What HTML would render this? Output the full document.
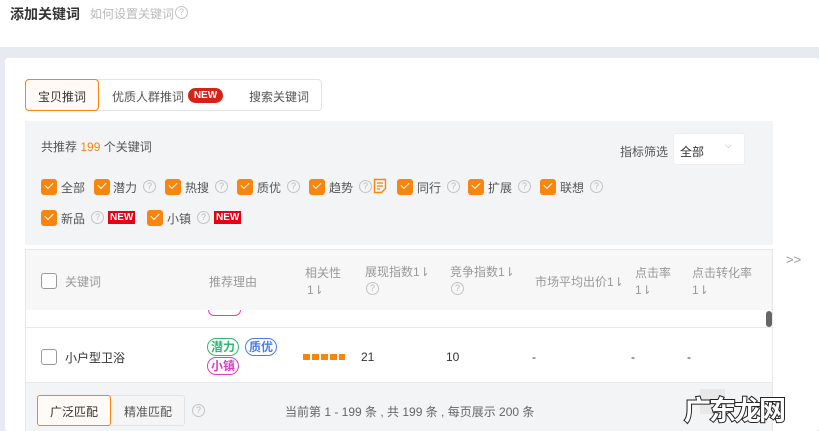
<!DOCTYPE html>
<html><head><meta charset="utf-8"><style>
*{margin:0;padding:0;box-sizing:border-box}
body{width:819px;height:431px;overflow:hidden;background:#fff;font-family:"Liberation Sans","Noto Sans CJK SC",sans-serif;font-size:12px;color:#333;position:relative}
.a{position:absolute;white-space:nowrap}
.cb{position:absolute;width:16px;height:16px;border-radius:3px;background:#f7850e}
.cb::after{content:"";position:absolute;left:4px;top:3px;width:7px;height:4px;border-left:1.6px solid #fff;border-bottom:1.6px solid #fff;transform:rotate(-45deg)}
.cbe{position:absolute;width:16px;height:16px;border-radius:3px;border:1px solid #999;background:#fff}
.q{position:absolute;width:13px;height:13px;border:1px solid #c4c4c4;border-radius:50%;color:#bbb;font-size:9px;line-height:11px;text-align:center}
.new{position:absolute;background:#e60012;color:#fff;font-size:10px;font-weight:bold;height:13px;line-height:13px;padding:0 2px}
.tag{position:absolute;height:18px;border:1px solid;border-radius:9px;font-size:12px;font-weight:bold;line-height:16px;padding:0 3px}
.g{color:#999}
</style></head><body>
<div class="a" style="left:10px;top:4px;font-size:14px;font-weight:bold;color:#333">添加关键词</div>
<div class="a" style="left:90px;top:5px;font-size:12px;color:#bbb">如何设置关键词</div>
<div class="q" style="left:175px;top:6px">?</div>
<div class="a" style="left:0;top:47px;width:819px;height:384px;background:#e8eaf2"></div>
<div class="a" style="left:5px;top:58px;width:814px;height:373px;background:#fff;border-radius:3px"></div>

<div class="a" style="left:25px;top:79px;width:297px;height:32px;border:1px solid #e3e3e3;border-radius:4px"></div>
<div class="a" style="left:25px;top:79px;width:74px;height:32px;border:1px solid #f7850e;border-radius:4px;background:#fffaf5"></div>
<div class="a" style="left:38px;top:88px;color:#333">宝贝推词</div>
<div class="a" style="left:112px;top:88px;color:#555">优质人群推词</div>
<div class="a" style="left:188px;top:88px;width:35px;height:15px;border-radius:8px;background:#d5231a;color:#fff;font-size:10px;font-weight:bold;line-height:15px;text-align:center">NEW</div>
<div class="a" style="left:249px;top:88px;color:#555">搜索关键词</div>

<div class="a" style="left:25px;top:121px;width:748px;height:124px;background:#f3f4f6"></div>
<div class="a" style="left:41px;top:138px;color:#555">共推荐 <span style="color:#f7850e">199</span> 个关键词</div>
<div class="a" style="left:620px;top:143px;color:#555">指标筛选</div>
<div class="a" style="left:673px;top:133px;width:72px;height:32px;background:#fff;border-radius:3px;border:1px solid #eee"></div>
<div class="a" style="left:680px;top:143px;color:#333">全部</div>
<div class="a" style="left:725px;top:140px;color:#aaa;font-size:9px">⌵</div>

<div class="cb" style="left:41px;top:179px"></div><div class="a" style="left:61px;top:179px;color:#555">全部</div>
<div class="cb" style="left:94px;top:179px"></div><div class="a" style="left:113px;top:179px;color:#555">潜力</div><div class="q" style="left:143px;top:180px">?</div>
<div class="cb" style="left:165px;top:179px"></div><div class="a" style="left:185px;top:179px;color:#555">热搜</div><div class="q" style="left:215px;top:180px">?</div>
<div class="cb" style="left:237px;top:179px"></div><div class="a" style="left:257px;top:179px;color:#555">质优</div><div class="q" style="left:287px;top:180px">?</div>
<div class="cb" style="left:309px;top:179px"></div><div class="a" style="left:329px;top:179px;color:#555">趋势</div><div class="q" style="left:359px;top:180px">?</div>
<svg class="a" style="left:373px;top:178px" width="14" height="16" viewBox="0 0 14 16"><path d="M1.5 1.5h11v9l-4 4h-7z" fill="none" stroke="#f7850e" stroke-width="1.4"/><path d="M4 5h6M4 8h6M4 11h3" stroke="#f7850e" stroke-width="1.3"/></svg>
<div class="cb" style="left:397px;top:179px"></div><div class="a" style="left:417px;top:179px;color:#555">同行</div><div class="q" style="left:447px;top:180px">?</div>
<div class="cb" style="left:468px;top:179px"></div><div class="a" style="left:488px;top:179px;color:#555">扩展</div><div class="q" style="left:518px;top:180px">?</div>
<div class="cb" style="left:540px;top:179px"></div><div class="a" style="left:560px;top:179px;color:#555">联想</div><div class="q" style="left:590px;top:180px">?</div>

<div class="cb" style="left:41px;top:210px"></div><div class="a" style="left:61px;top:210px;color:#555">新品</div><div class="q" style="left:91px;top:211px">?</div><div class="new" style="left:108px;top:211px">NEW</div>
<div class="cb" style="left:147px;top:210px"></div><div class="a" style="left:167px;top:210px;color:#555">小镇</div><div class="q" style="left:197px;top:211px">?</div><div class="new" style="left:214px;top:211px">NEW</div>

<div class="a" style="left:25px;top:249px;width:748px;height:182px;border:1px solid #e8e8e8;border-bottom:none"></div>
<div class="a" style="left:26px;top:250px;width:746px;height:60px;background:#f7f7f7"></div>
<div class="cbe" style="left:41px;top:273px"></div>
<div class="a g" style="left:65px;top:273px">关键词</div>
<div class="a g" style="left:209px;top:273px">推荐理由</div>
<div class="a g" style="left:305px;top:264px">相关性</div><div class="a g" style="left:307px;top:283px">1⇂</div>
<div class="a g" style="left:365px;top:263px">展现指数1⇂</div><div class="q" style="left:366px;top:282px">?</div>
<div class="a g" style="left:450px;top:263px">竞争指数1⇂</div><div class="q" style="left:451px;top:282px">?</div>
<div class="a g" style="left:535px;top:273px">市场平均出价1⇂</div>
<div class="a g" style="left:635px;top:264px">点击率</div><div class="a g" style="left:635px;top:283px">1⇂</div>
<div class="a g" style="left:692px;top:264px">点击转化率</div><div class="a g" style="left:692px;top:283px">1⇂</div>
<div class="a" style="left:786px;top:252px;color:#999;font-size:13px">&gt;&gt;</div>
<div class="a" style="left:208px;top:310px;width:33px;height:6px;border:1px solid #e040c0;border-top:none;border-radius:0 0 8px 8px"></div>
<div class="a" style="left:766px;top:311px;width:6px;height:16px;background:#666;border-radius:3px"></div>
<div class="a" style="left:26px;top:327px;width:746px;height:1px;background:#e8e8e8"></div>
<div class="cbe" style="left:41px;top:349px"></div>
<div class="a" style="left:65px;top:349px;color:#333">小户型卫浴</div>
<div class="tag" style="left:207px;top:338px;color:#2fb86f;border-color:#2fb86f">潜力</div>
<div class="tag" style="left:245px;top:338px;color:#4a7cf0;border-color:#4a7cf0">质优</div>
<div class="tag" style="left:207px;top:357px;color:#d63fc4;border-color:#d63fc4">小镇</div>
<div class="a" style="left:303px;top:354px;width:42px;height:6px;background:repeating-linear-gradient(90deg,#f7850e 0 7px,transparent 7px 9px)"></div>
<div class="a" style="left:361px;top:350px">21</div>
<div class="a" style="left:446px;top:350px">10</div>
<div class="a" style="left:532px;top:350px">-</div>
<div class="a" style="left:631px;top:350px">-</div>
<div class="a" style="left:687px;top:350px">-</div>

<div class="a" style="left:26px;top:382px;width:746px;height:49px;background:#f3f4f6;border-top:1px solid #e8e8e8"></div>
<div class="a" style="left:37px;top:395px;width:148px;height:31px;border:1px solid #e3e3e3;border-radius:3px;background:#f5f5f5"></div>
<div class="a" style="left:37px;top:395px;width:74px;height:31px;border:1px solid #f7850e;border-radius:3px;background:#fffaf5"></div>
<div class="a" style="left:50px;top:403px;color:#333">广泛匹配</div>
<div class="a" style="left:124px;top:403px;color:#555">精准匹配</div>
<div class="q" style="left:192px;top:404px">?</div>
<div class="a" style="left:285px;top:403px;color:#666">当前第 1 - 199 条 , 共 199 条 , 每页展示 200 条</div>
<div class="a" style="left:700px;top:389px;width:25px;height:25px;background:#e8e8e8"></div>
<div class="a" style="left:684px;top:389px;font-size:27px;font-weight:bold;color:#fff;-webkit-text-stroke:2px #222;paint-order:stroke fill;letter-spacing:-2px">广东龙网</div>
</body></html>
